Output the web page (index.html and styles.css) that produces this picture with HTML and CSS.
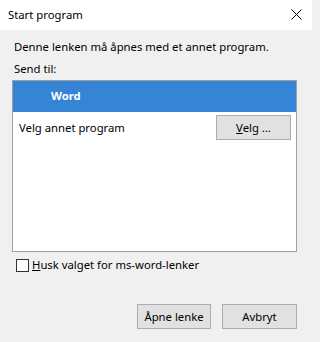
FILE: index.html
```html
<!DOCTYPE html>
<html lang="no">
<head>
<meta charset="utf-8">
<title>Start program</title>
<link rel="stylesheet" href="styles.css">
</head>
<body>
<div class="dialog">
  <div class="titlebar">
    <span class="title">Start program</span>
    <svg class="close" width="11" height="11" viewBox="0 0 11 11"><path d="M0.5 0.5 L10.5 10.5 M10.5 0.5 L0.5 10.5" stroke="#000" stroke-width="1" fill="none"/></svg>
  </div>
  <div class="content">
    <p class="desc">Denne lenken må åpnes med et annet program.</p>
    <p class="label">Send til:</p>
    <div class="listbox">
      <div class="item selected"><span class="icon"></span><span class="name">Word</span></div>
      <div class="item other"><span class="other-text">Velg annet program</span><button class="btn choose"><u>V</u>elg ...</button></div>
    </div>
    <label class="remember"><span class="checkbox"></span><span><u>H</u>usk valget for ms-word-lenker</span></label>
    <div class="actions">
      <button class="btn open">Åpne lenke</button>
      <button class="btn cancel">Avbryt</button>
    </div>
  </div>
</div>
</body>
</html>
```
FILE: styles.css
```css
html, body {
  margin: 0;
  padding: 0;
}
body {
  width: 312px;
  height: 342px;
  background: #f0f0f0;
  font-family: "Noto Sans", "Open Sans", sans-serif;
  font-size: 11.3px;
  color: #000;
  overflow: hidden;
}
.dialog {
  display: flex;
  flex-direction: column;
  height: 342px;
}
.titlebar {
  height: 30px;
  background: #fff;
  display: flex;
  align-items: center;
  justify-content: space-between;
  padding: 0 10px 0 8px;
}
.title {
  line-height: 16px;
}
.close {
  display: block;
  margin-top: -1px;
}
.content {
  padding: 9px 15px 0 12px;
  display: flex;
  flex-direction: column;
}
.desc, .label {
  margin: 0;
  line-height: 16px;
  padding-left: 2px;
}
.desc {
  margin-bottom: 6px;
}
.label {
  margin-bottom: 3px;
}
.listbox {
  height: 170px;
  background: #fff;
  border: 1px solid #a0a0a0;
  display: flex;
  flex-direction: column;
}
.item {
  display: flex;
  align-items: center;
}
.selected {
  height: 31px;
  background: #3584d6;
  color: #fff;
  font-weight: bold;
  padding-bottom: 2px;
  box-sizing: border-box;
}
.icon {
  width: 38px;
}
.other {
  height: 31px;
  padding: 0 5px 0 6px;
  justify-content: space-between;
}
.btn {
  font: inherit;
  color: #000;
  background: #e1e1e1;
  border: 1px solid #adadad;
  height: 25px;
  padding: 0;
  margin: 0;
}
.choose {
  width: 75px;
}
.remember {
  display: flex;
  align-items: center;
  margin-top: 6px;
  padding-left: 4px;
  gap: 3px;
  line-height: 14px;
}
.checkbox {
  width: 11px;
  height: 11px;
  border: 1px solid #333;
  background: #fff;
}
.actions {
  display: flex;
  justify-content: flex-end;
  gap: 11px;
  margin-top: 32px;
}
.open {
  width: 74px;
}
.cancel {
  width: 75px;
}
```
